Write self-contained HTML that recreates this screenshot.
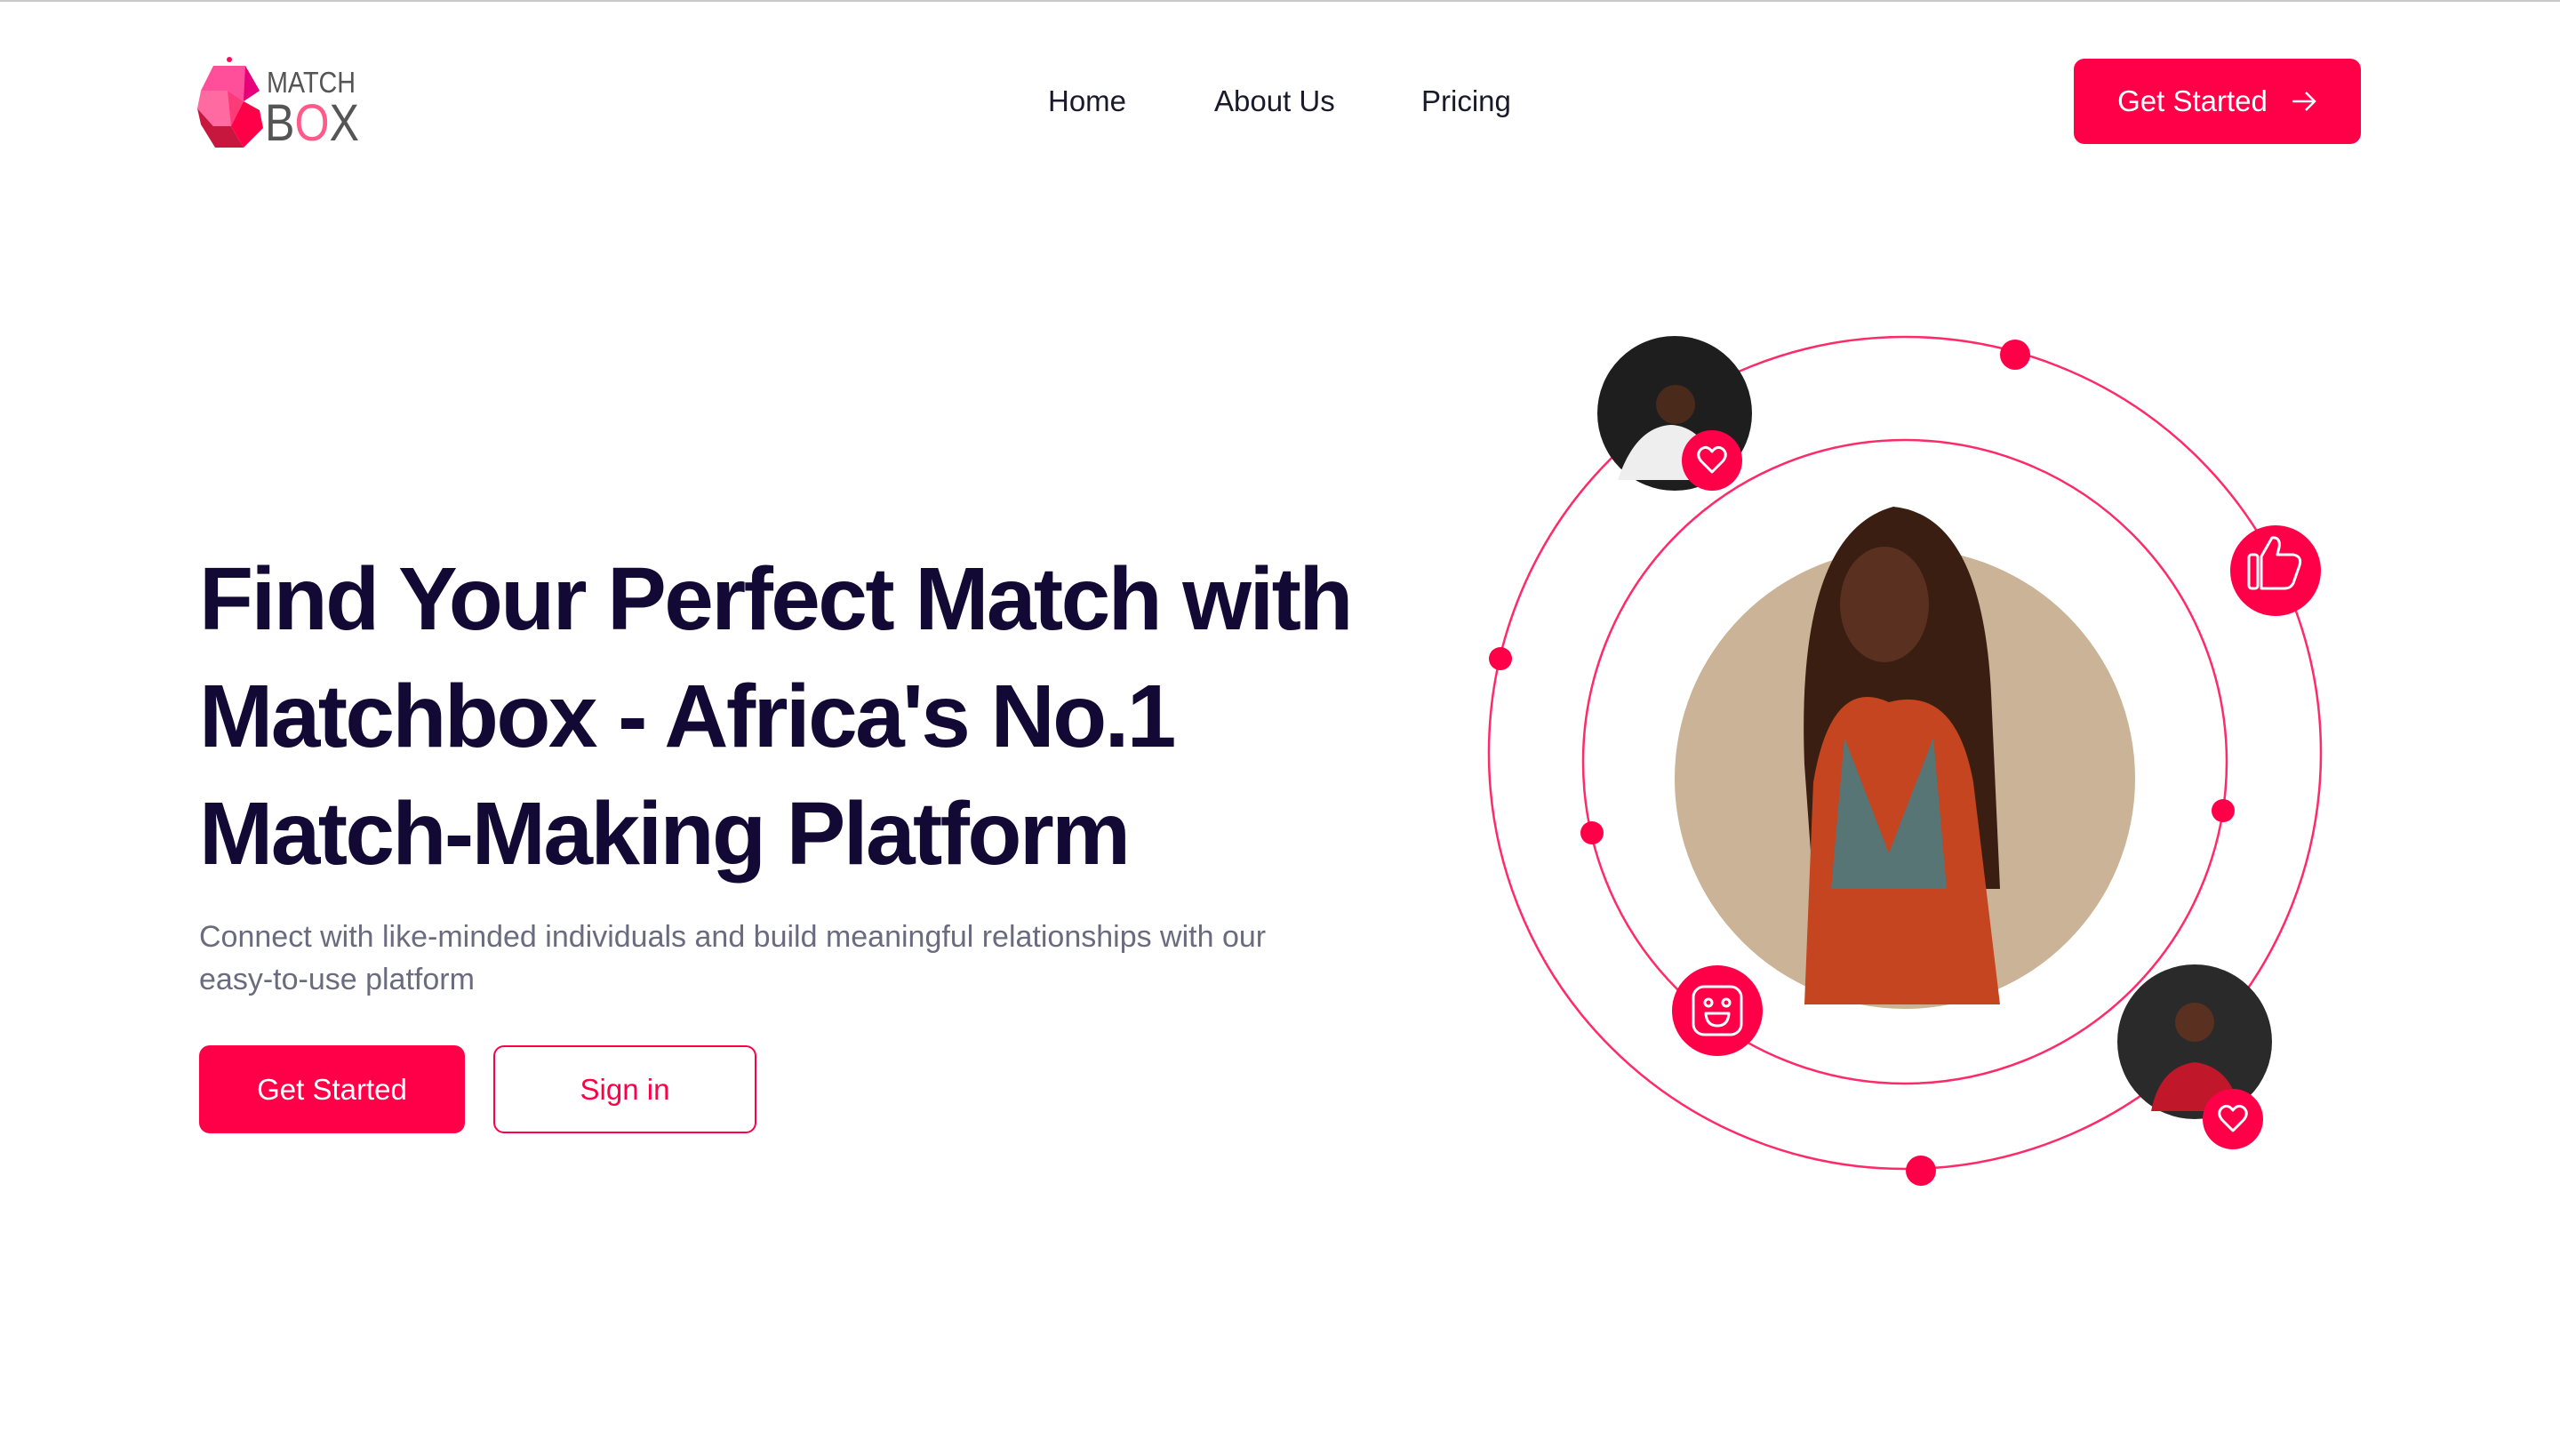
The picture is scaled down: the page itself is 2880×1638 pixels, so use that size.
<!DOCTYPE html>
<html><head><meta charset="utf-8"><style>
*{margin:0;padding:0;box-sizing:border-box}
html,body{width:2880px;height:1638px;overflow:hidden;background:#fff;font-family:"Liberation Sans",sans-serif}
.topline{position:absolute;left:0;top:0;width:2880px;height:2px;background:#c9c9c9}
.nav{position:absolute;top:94px;font-size:33px;color:#1a1a2a;line-height:40px}
.btn{position:absolute;display:flex;align-items:center;justify-content:center;border-radius:12px;font-size:33px}
h1{position:absolute;left:224px;top:608px;font-size:100px;line-height:132px;color:#120a35;font-weight:bold;letter-spacing:-2.6px;white-space:nowrap}
p{position:absolute;left:224px;top:1030px;width:1215px;font-size:34px;line-height:48px;color:#6b6b80;letter-spacing:0}
</style></head><body>
<div class="topline"></div>
<svg style="position:absolute;left:222px;top:62px" width="190" height="104" viewBox="0 0 190 104">
<circle cx="36" cy="5" r="3" fill="#ff0a5a"/>
<polygon points="18,12 54,12 70,40 52,52 34,40 4,40" fill="#ff4f9a"/>
<polygon points="54,12 70,40 52,52" fill="#e8007a"/>
<polygon points="4,40 34,40 52,52 38,80 18,80 0,60" fill="#ff6aa0"/>
<polygon points="34,40 52,52 38,80" fill="#ff3a78"/>
<polygon points="0,60 18,80 38,80 52,104 20,104 4,78" fill="#c8173f"/>
<polygon points="52,52 70,62 74,82 52,104 38,80" fill="#ff0048"/>
<text x="78" y="42" font-size="33" font-family="Liberation Sans" fill="#555" textLength="100" lengthAdjust="spacingAndGlyphs">MATCH</text>
<text x="76" y="96" font-size="58" font-family="Liberation Sans" fill="#555" textLength="106" lengthAdjust="spacingAndGlyphs">B<tspan fill="#ff5a8a">O</tspan>X</text>
</svg>
<div class="nav" style="left:1179px">Home</div>
<div class="nav" style="left:1366px">About Us</div>
<div class="nav" style="left:1599px">Pricing</div>
<div class="btn" style="left:2333px;top:66px;width:323px;height:96px;background:#ff0048;color:#fff">Get Started<svg style="margin-left:26px" width="30" height="24" viewBox="0 0 30 24"><path d="M2 12H27M17 2L27 12L17 22" stroke="#fff" stroke-width="2.5" fill="none"/></svg></div>
<h1>Find Your Perfect Match with<br>Matchbox - Africa's No.1<br>Match-Making Platform</h1>
<p>Connect with like-minded individuals and build meaningful relationships with our easy-to-use platform</p>
<div class="btn" style="left:224px;top:1176px;width:299px;height:99px;background:#ff0048;color:#fff">Get Started</div>
<div class="btn" style="left:555px;top:1176px;width:296px;height:99px;border:2px solid #ff0048;color:#ff0048">Sign in</div>
<svg style="position:absolute;left:0;top:0" width="2880" height="1638">
<circle cx="2143" cy="847" r="468" fill="none" stroke="#ff2a68" stroke-width="2.5"/>
<circle cx="2143" cy="857" r="362" fill="none" stroke="#ff2a68" stroke-width="2.5"/>
<circle cx="2143" cy="876" r="259" fill="#cbb397"/>
<path d="M2030 860 Q2020 600 2130 570 Q2230 580 2240 780 L2250 1000 L2040 1000 Z" fill="#3a1e12"/>
<ellipse cx="2120" cy="680" rx="50" ry="65" fill="#5a3020"/>
<path d="M2040 880 Q2060 760 2125 790 Q2200 770 2220 880 L2250 1130 L2030 1130 Z" fill="#c4451f"/>
<path d="M2075 830 L2125 960 L2175 830 L2190 1000 L2060 1000 Z" fill="#2a8a9a" opacity=".7"/>
<circle cx="2267" cy="399" r="17" fill="#ff0048"/>
<circle cx="1688" cy="741" r="13" fill="#ff0048"/>
<circle cx="1791" cy="937" r="13" fill="#ff0048"/>
<circle cx="2501" cy="912" r="13" fill="#ff0048"/>
<circle cx="2161" cy="1317" r="17" fill="#ff0048"/>
<circle cx="1884" cy="465" r="87" fill="#1e1e1e"/>
<path d="M1820 540 Q1840 480 1880 478 Q1920 480 1935 540 Z" fill="#eee"/>
<circle cx="1885" cy="455" r="22" fill="#4a2a1a"/>
<circle cx="2469" cy="1172" r="87" fill="#2a2a2a"/>
<path d="M2420 1250 Q2430 1200 2469 1195 Q2510 1200 2520 1250 Z" fill="#c0182a"/>
<circle cx="2469" cy="1150" r="22" fill="#5a3020"/>
<g fill="#ff0048"><circle cx="1926" cy="518" r="34"/><circle cx="2512" cy="1259" r="34"/><circle cx="2560" cy="642" r="51"/><circle cx="1932" cy="1137" r="51"/></g>
<g stroke="#fff" stroke-width="3" fill="none" stroke-linejoin="round">
<path d="M1926 531 L1914 519 Q1908 512 1913 506 Q1920 500 1926 508 Q1932 500 1939 506 Q1944 512 1938 519 Z"/>
<path d="M2512 1272 L2500 1260 Q2494 1253 2499 1247 Q2506 1241 2512 1249 Q2518 1241 2525 1247 Q2530 1253 2524 1260 Z"/>
<rect x="2530" y="624" width="10" height="38" rx="3"/>
<path d="M2544 626 L2556 605 Q2566 604 2564 616 L2562 624 L2580 624 Q2590 626 2587 636 L2580 656 Q2577 662 2570 662 L2544 662 Z"/>
<rect x="1905" y="1110" width="54" height="54" rx="12"/>
<circle cx="1922" cy="1128" r="4"/><circle cx="1942" cy="1128" r="4"/>
<path d="M1919 1140 L1945 1140 Q1944 1154 1932 1154 Q1920 1154 1919 1140 Z"/>
</g>
</svg>
</body></html>
